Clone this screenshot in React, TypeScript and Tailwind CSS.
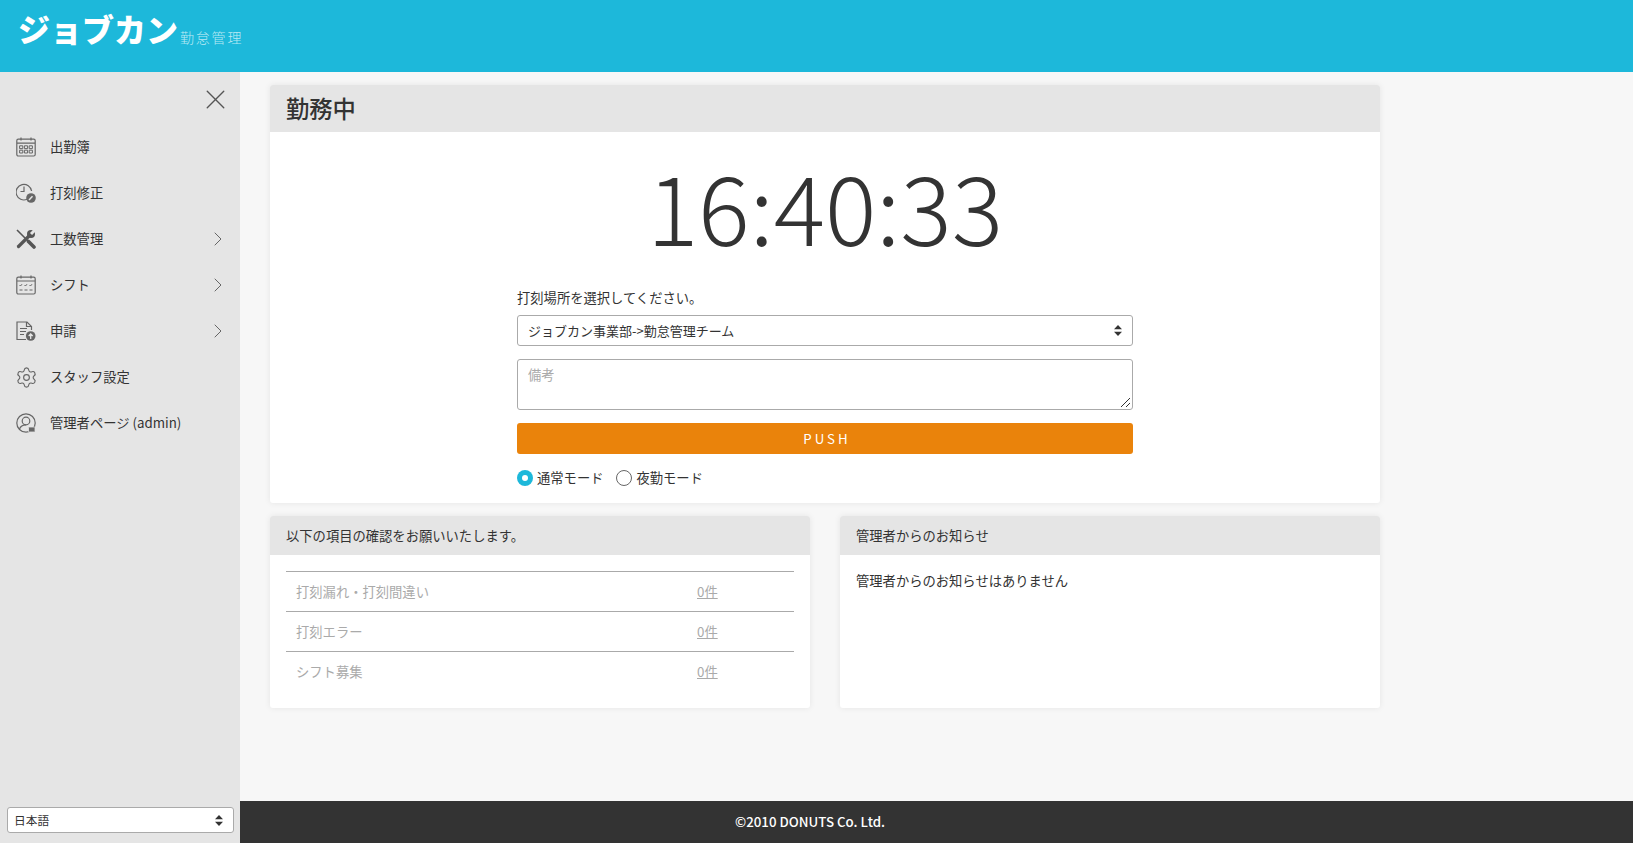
import React from "react";
import { X, ChevronRight, Settings } from "lucide-react";

const CalendarIcon = () => (
  <svg width="20" height="20" viewBox="0 0 20 20" fill="none" stroke="#666" strokeWidth="1.2">
    <rect x="0.8" y="2.2" width="18.4" height="16.8" rx="1.5" />
    <path d="M1 6.200h18M5 0.500v3M15 0.500v3" />
    <path d="M3.600 8.800h3.200v2.800H3.600zM8.400 8.800h3.200v2.800H8.400zM13.200 8.800h3.200v2.800h-3.200zM3.600 13.200h3.200V16H3.600zM8.400 13.200h3.200V16H8.400zM13.200 13.200h3.200V16h-3.200z" strokeWidth="1" />
  </svg>
);

const ClockIcon = () => (
  <svg width="20" height="20" viewBox="0 0 20 20" fill="none" stroke="#666" strokeWidth="1.2">
    <path d="M11 16.300A7.800 7.800 0 1 1 15.600 8" />
    <path d="M8 3.500v5H4.500" />
    <circle cx="15" cy="15" r="4.800" fill="#666" stroke="none" />
    <path d="M13 17l3.500-3.800" stroke="#e5e5e5" strokeWidth="1.500" />
  </svg>
);

const ToolsIcon = () => (
  <svg width="20" height="20" viewBox="0 0 20 20" fill="none" stroke="#555">
    <path d="M1 1l11 11" strokeWidth="1.600" />
    <path d="M12.500 12.500l5.500 5.500" strokeWidth="3.600" strokeLinecap="round" />
    <path d="M2.500 17.500L13 7" strokeWidth="3.200" strokeLinecap="round" />
    <circle cx="15" cy="5" r="4" fill="#555" stroke="none" />
    <path d="M15 5l5-5" stroke="#e5e5e5" strokeWidth="3" />
  </svg>
);

const ShiftIcon = () => (
  <svg width="20" height="20" viewBox="0 0 20 20" fill="none" stroke="#666" strokeWidth="1.2">
    <rect x="0.8" y="2.2" width="18.4" height="16.8" rx="1.5" />
    <path d="M1 6h18M5 0.500v3M15 0.500v3" />
    <path d="M3.500 10l1 1 1.500-1.800M8.500 10l1 1 1.500-1.800M13.500 10l1 1 1.500-1.800M3.500 15h3M8.500 15h3M13.500 15h3" strokeWidth="1" />
  </svg>
);

const RequestIcon = () => (
  <svg width="20" height="20" viewBox="0 0 20 20" fill="none" stroke="#666" strokeWidth="1.2">
    <path d="M10 18.500H1V1h10l4.500 4.500V9" />
    <path d="M10.500 1v4.500H15M4 7.500h7M4 10.500h6M4 13.500h4" />
    <circle cx="14.700" cy="15" r="4.800" fill="#666" stroke="none" />
    <path d="M14.700 18v-5M12.700 15l2-2 2 2" stroke="#e5e5e5" strokeWidth="1.300" />
  </svg>
);

const AdminIcon = () => (
  <svg width="20" height="20" viewBox="0 0 20 20" fill="none" stroke="#666" strokeWidth="1.2">
    <circle cx="10" cy="10" r="9.200" />
    <circle cx="10" cy="8" r="3.800" />
    <path d="M3.500 16c1-3 3.500-4.200 6.500-4.200" />
    <rect x="12.500" y="14" width="6.500" height="5" rx="0.500" fill="#666" stroke="#e5e5e5" strokeWidth="0.800" />
  </svg>
);

const SelectArrows = () => (
  <svg width="8" height="11" viewBox="0 0 8 11" fill="#333">
    <path d="M4 0l4 4.300H0zM4 11L0 6.700h8z" />
  </svg>
);

const menuItems = [
  { label: "出勤簿", icon: <CalendarIcon /> },
  { label: "打刻修正", icon: <ClockIcon /> },
  { label: "工数管理", icon: <ToolsIcon />, arrow: true },
  { label: "シフト", icon: <ShiftIcon />, arrow: true },
  { label: "申請", icon: <RequestIcon />, arrow: true },
  { label: "スタッフ設定", icon: <Settings size={23} color="#666" strokeWidth={1.2} className="-ml-[1px]" /> },
  { label: "管理者ページ (admin)", icon: <AdminIcon /> },
];

const checks = ["打刻漏れ・打刻間違い", "打刻エラー", "シフト募集"];

export default function App() {
  return (
    <div className="h-screen flex flex-col overflow-hidden text-[13.3px] text-[#333] font-['Noto_Sans_CJK_JP','Noto_Sans',sans-serif]">
      <header className="h-[72px] shrink-0 bg-[#1db8da] pl-[18px] pt-[5px] flex items-start">
        <span className="text-[32px] leading-[46px] font-black text-white">ジョブカン</span>
        <span className="text-[14px] leading-[20px] mt-[22px] ml-[2px] text-[#b9e9f4] font-light tracking-[1.8px]">勤怠管理</span>
      </header>

      <div className="flex-1 flex min-h-0">
        <aside className="w-[240px] shrink-0 bg-[#e5e5e5] flex flex-col justify-between">
          <div>
            <div className="flex justify-end pr-[8px] pt-[11px] h-[52px]">
              <X size={33} color="#555" strokeWidth={1} />
            </div>
            <ul>
              {menuItems.map((item) => (
                <li key={item.label} className="h-[46px] flex items-center pl-[16px] pr-[10px]">
                  <span className="w-[34px] flex justify-start">{item.icon}</span>
                  <span className="flex-1">{item.label}</span>
                  {item.arrow && <ChevronRight size={24} color="#666" strokeWidth={1} />}
                </li>
              ))}
            </ul>
          </div>
          <div className="pl-[7px] pr-[6px] pb-[10px]">
            <div className="h-[26px] bg-white border border-[#aaa] rounded-[3px] flex items-center justify-between pl-[6px] pr-[10px] text-[11.700px]">
              <span>日本語</span>
              <SelectArrows />
            </div>
          </div>
        </aside>

        <div className="flex-1 flex flex-col min-w-0">
          <main className="flex-1 bg-[#f7f7f7] pt-[13px] pl-[30px]">
            <div className="w-[1110px]">
              <section className="h-[418px] bg-white rounded-[3px] shadow-[0_0_6px_rgba(0,0,0,0.08)] overflow-hidden">
                <h2 className="h-[47px] bg-[#e5e5e5] pl-[16px] flex items-center text-[23.300px] font-medium">勤務中</h2>
                <div className="text-center text-[96px] leading-[163px] font-extralight mt-[-9px]">16:40:33</div>
                <div className="w-[616px] ml-[247px]">
                  <p className="leading-[20px] mt-[2px]">打刻場所を選択してください。</p>
                  <div className="h-[31px] mt-[7px] border border-[#aaa] rounded-[3px] flex items-center justify-between pl-[10px] pr-[10px] text-[13px]">
                    <span>ジョブカン事業部-&gt;勤怠管理チーム</span>
                    <SelectArrows />
                  </div>
                  <div className="relative h-[51px] mt-[13px] border border-[#aaa] rounded-[3px] pl-[10px] pt-[5px] text-[#aaa]">
                    備考
                    <svg className="absolute right-[1px] bottom-[1px]" width="11" height="11" viewBox="0 0 11 11" stroke="#333" strokeWidth="1">
                      <path d="M1 10L10 1M6 10l4-4" />
                    </svg>
                  </div>
                  <button className="w-full h-[31px] mt-[13px] pl-[4px] bg-[#ea830b] rounded-[3px] text-white text-[13.3px] tracking-[3px]">PUSH</button>
                  <div className="flex items-center mt-[15px] h-[18px]">
                    <span className="w-[16px] h-[16px] rounded-full bg-[#1db8da] flex items-center justify-center">
                      <span className="w-[6px] h-[6px] rounded-full bg-white" />
                    </span>
                    <span className="ml-[4px]">通常モード</span>
                    <span className="w-[16px] h-[16px] ml-[13px] rounded-full border border-[#666] bg-white" />
                    <span className="ml-[4px]">夜勤モード</span>
                  </div>
                </div>
              </section>

              <div className="flex gap-[30px] mt-[13px]">
                <section className="w-[540px] h-[192px] bg-white rounded-[3px] shadow-[0_0_6px_rgba(0,0,0,0.08)] overflow-hidden">
                  <h3 className="h-[39px] bg-[#e5e5e5] pl-[16px] flex items-center">以下の項目の確認をお願いいたします。</h3>
                  <div className="px-[16px] pt-[16px]">
                    {checks.map((label) => (
                      <div key={label} className="h-[40px] border-t border-[#aaa] flex items-center pl-[10px] text-[#aaa]">
                        <span className="w-[401px]">{label}</span>
                        <a className="underline">0件</a>
                      </div>
                    ))}
                  </div>
                </section>
                <section className="w-[540px] h-[192px] bg-white rounded-[3px] shadow-[0_0_6px_rgba(0,0,0,0.08)] overflow-hidden">
                  <h3 className="h-[39px] bg-[#e5e5e5] pl-[16px] flex items-center">管理者からのお知らせ</h3>
                  <p className="pl-[16px] pt-[16px] leading-[20px]">管理者からのお知らせはありません</p>
                </section>
              </div>
            </div>
          </main>
          <footer className="h-[42px] shrink-0 bg-[#333] text-white font-medium flex items-center pl-[495px]">©2010 DONUTS Co. Ltd.</footer>
        </div>
      </div>
    </div>
  );
}
